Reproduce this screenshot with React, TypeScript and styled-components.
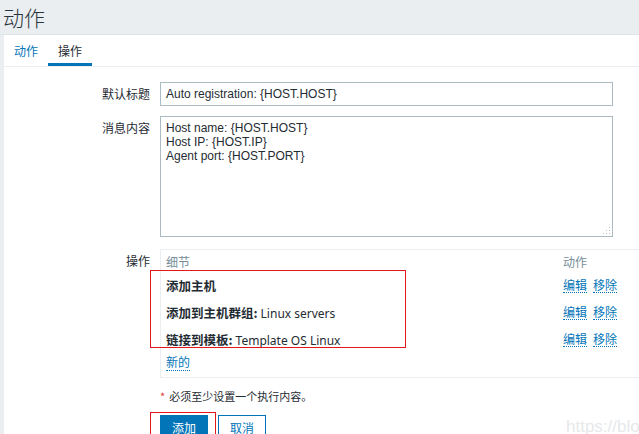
import React from 'react'
import styled, { createGlobalStyle } from 'styled-components'

const GlobalStyle = createGlobalStyle`
  html, body {
    margin: 0;
    padding: 0;
    background: #ebeef0;
    overflow: hidden;
  }
  body {
    font-family: "Noto Sans", "Noto Sans CJK SC", sans-serif;
    font-size: 12px;
    color: #1f2c33;
  }
`

const Page = styled.div`
  position: relative;
  width: 639px;
  height: 434px;
  overflow: hidden;
`

const Header = styled.div`
  height: 34px;
  padding-left: 3px;
  border-bottom: 1px solid #dfe4e7;
  display: flex;
  align-items: center;
`

const Title = styled.h1`
  margin: 0;
  font-size: 21px;
  font-weight: 300;
  color: #2a363d;
  font-family: "Noto Sans CJK SC", sans-serif;
`

const Panel = styled.div`
  margin-left: 4px;
  background: #fff;
  height: 400px;
`

const Tabs = styled.div`
  display: flex;
  height: 31px;
  border-bottom: 1px solid #ebeef0;
`

const Tab = styled.div<{ $active?: boolean }>`
  padding: 0 10px;
  display: flex;
  align-items: center;
  font-family: "Noto Sans CJK SC", sans-serif;
  color: ${({ $active }) => ($active ? '#1f2c33' : '#0275b8')};
  border-bottom: 3px solid ${({ $active }) => ($active ? '#0275b8' : 'transparent')};
  padding-top: 3px;
`

const Form = styled.div`
  padding-top: 15px;
  display: grid;
  grid-template-columns: 146px 1fr;
  column-gap: 10px;
`

const Label = styled.div<{ $gap?: number }>`
  text-align: right;
  padding-top: 5px;
  line-height: 14px;
  font-family: "Noto Sans CJK SC", sans-serif;
  margin-bottom: ${({ $gap }) => $gap ?? 0}px;
`

const Field = styled.div<{ $gap?: number }>`
  margin-bottom: ${({ $gap }) => $gap ?? 0}px;
`

const TextInput = styled.div`
  box-sizing: border-box;
  width: 453px;
  height: 24px;
  border: 1px solid #acbbc2;
  padding: 0 5px;
  line-height: 22px;
  font-family: "Liberation Sans", sans-serif;
`

const TextArea = styled.div`
  position: relative;
  box-sizing: border-box;
  width: 453px;
  height: 121px;
  border: 1px solid #acbbc2;
  padding: 4px 5px;
  line-height: 14px;
  font-family: "Liberation Sans", sans-serif;
`

const Grip = styled.svg`
  position: absolute;
  right: 1px;
  bottom: 1px;
`

const Table = styled.div`
  box-sizing: border-box;
  width: 520px;
  border: 1px solid #ebeef0;
  padding-bottom: 6px;
`

const TRow = styled.div<{ $h: number }>`
  display: grid;
  grid-template-columns: 397px 1fr;
  height: ${({ $h }) => $h}px;
  align-items: center;
`

const Cell = styled.div`
  padding-left: 5px;
  white-space: nowrap;
`

const HeadCell = styled.div`
  padding-left: 5px;
  color: #768d99;
  font-family: "Noto Sans CJK SC", sans-serif;
`

const Strong = styled.b`
  font-family: "Noto Sans CJK SC", sans-serif;
  font-size: 12.5px;
  font-weight: bold;
  margin-right: 3px;
`

const Links = styled.div`
  display: flex;
  gap: 6px;
  padding-left: 5px;
`

const Link = styled.span`
  color: #0275b8;
  font-family: "Noto Sans CJK SC", sans-serif;
  font-size: 12px;
  line-height: 14px;
  border-bottom: 1px dotted #0275b8;
`

const Required = styled.div`
  margin-top: 11px;
  line-height: 14px;
  font-size: 11px;
  font-family: "Noto Sans CJK SC", sans-serif;
`

const Star = styled.span`
  color: #e33734;
  margin-right: 4px;
`

const Buttons = styled.div`
  margin-top: 12px;
  display: flex;
  gap: 10px;
`

const Button = styled.div<{ $primary?: boolean }>`
  box-sizing: border-box;
  height: 24px;
  padding: 0 11px;
  display: flex;
  align-items: center;
  font-family: "Noto Sans CJK SC", sans-serif;
  border: 1px solid #0275b8;
  background: ${({ $primary }) => ($primary ? '#0275b8' : '#fff')};
  color: ${({ $primary }) => ($primary ? '#fff' : '#0275b8')};
`

const Mark = styled.div<{ $x: number; $y: number; $w: number; $h: number }>`
  position: absolute;
  left: ${({ $x }) => $x}px;
  top: ${({ $y }) => $y}px;
  width: ${({ $w }) => $w}px;
  height: ${({ $h }) => $h}px;
  border: 1px solid #e8141b;
  pointer-events: none;
`

const Watermark = styled.div`
  position: absolute;
  left: 566px;
  top: 417px;
  font-family: "Liberation Sans", sans-serif;
  font-size: 17px;
  color: #e6e8ea;
  white-space: nowrap;
`

const ops = [
  { key: '添加主机', value: '' },
  { key: '添加到主机群组:', value: 'Linux servers' },
  { key: '链接到模板:', value: 'Template OS Linux' },
]

export default function App() {
  return (
    <Page>
      <GlobalStyle />
      <Header>
        <Title>动作</Title>
      </Header>
      <Panel>
        <Tabs>
          <Tab>动作</Tab>
          <Tab $active>操作</Tab>
        </Tabs>
        <Form>
          <Label $gap={10}>默认标题</Label>
          <Field $gap={10}>
            <TextInput>Auto registration: {'{HOST.HOST}'}</TextInput>
          </Field>

          <Label $gap={12}>消息内容</Label>
          <Field $gap={12}>
            <TextArea>
              Host name: {'{HOST.HOST}'}
              <br />
              Host IP: {'{HOST.IP}'}
              <br />
              Agent port: {'{HOST.PORT}'}
              <Grip width="10" height="10" viewBox="0 0 10 10">
                <g fill="#b8c2c8">
                  <rect x="8" y="2" width="1" height="1" />
                  <rect x="5" y="5" width="1" height="1" />
                  <rect x="8" y="5" width="1" height="1" />
                  <rect x="2" y="8" width="1" height="1" />
                  <rect x="5" y="8" width="1" height="1" />
                  <rect x="8" y="8" width="1" height="1" />
                </g>
              </Grip>
            </TextArea>
          </Field>

          <Label>操作</Label>
          <Field>
            <Table>
              <TRow $h={22}>
                <HeadCell>细节</HeadCell>
                <HeadCell>动作</HeadCell>
              </TRow>
              {ops.map((op) => (
                <TRow $h={27} key={op.key}>
                  <Cell>
                    <Strong>{op.key}</Strong>
                    {op.value}
                  </Cell>
                  <Links>
                    <Link>编辑</Link>
                    <Link>移除</Link>
                  </Links>
                </TRow>
              ))}
              <TRow $h={18}>
                <Cell>
                  <Link>新的</Link>
                </Cell>
              </TRow>
            </Table>
            <Required>
              <Star>*</Star>必须至少设置一个执行内容。
            </Required>
            <Buttons>
              <Button $primary>添加</Button>
              <Button>取消</Button>
            </Buttons>
          </Field>
        </Form>
      </Panel>
      <Mark $x={150} $y={270} $w={254} $h={76} />
      <Mark $x={150} $y={412} $w={64} $h={30} />
      <Watermark>https://blog</Watermark>
    </Page>
  )
}
